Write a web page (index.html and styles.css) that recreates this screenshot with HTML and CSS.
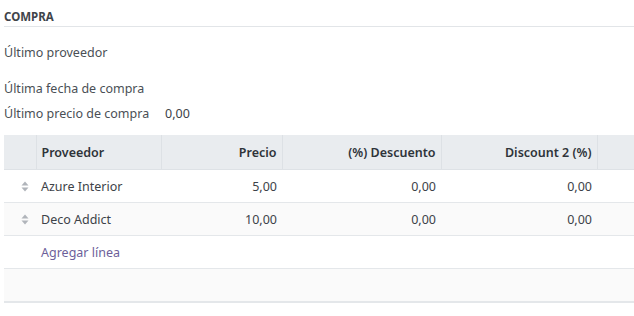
FILE: index.html
```html
<!DOCTYPE html>
<html lang="es">
<head>
  <meta charset="UTF-8">
  <title>Compra</title>
  <link rel="stylesheet" href="styles.css">
</head>
<body>
  <div class="grupo">
    <div class="grupo-titulo">Compra</div>

    <div class="campo campo-alto"><span class="etiqueta">Último proveedor</span></div>
    <div class="campo"><span class="etiqueta">Última fecha de compra</span></div>
    <div class="campo campo-corto">
      <span class="etiqueta">Último precio de compra</span>
      <span class="valor">0,00</span>
    </div>

    <table class="lista">
      <colgroup>
        <col class="col-handle">
        <col class="col-proveedor">
        <col class="col-precio">
        <col class="col-desc">
        <col class="col-desc2">
        <col class="col-resto">
      </colgroup>
      <thead>
        <tr>
          <th></th>
          <th>Proveedor</th>
          <th class="num">Precio</th>
          <th class="num">(%) Descuento</th>
          <th class="num">Discount 2 (%)</th>
          <th></th>
        </tr>
      </thead>
      <tbody>
        <tr>
          <td class="handle"><svg width="8" height="11" viewBox="0 0 8 11"><path d="M4 0.5 L7.5 4.5 H0.5 Z M4 10.5 L7.5 6.5 H0.5 Z" fill="#b0b4ba"/></svg></td>
          <td>Azure Interior</td>
          <td class="num">5,00</td>
          <td class="num">0,00</td>
          <td class="num">0,00</td>
          <td></td>
        </tr>
        <tr class="par">
          <td class="handle"><svg width="8" height="11" viewBox="0 0 8 11"><path d="M4 0.5 L7.5 4.5 H0.5 Z M4 10.5 L7.5 6.5 H0.5 Z" fill="#b0b4ba"/></svg></td>
          <td>Deco Addict</td>
          <td class="num">10,00</td>
          <td class="num">0,00</td>
          <td class="num">0,00</td>
          <td></td>
        </tr>
        <tr>
          <td></td>
          <td colspan="5"><a class="agregar" href="#">Agregar línea</a></td>
        </tr>
        <tr class="par vacia">
          <td colspan="6"></td>
        </tr>
      </tbody>
    </table>
  </div>
</body>
</html>
```

FILE: styles.css
```css
body {
  margin: 0;
  font-family: "Noto Sans", "Open Sans", sans-serif;
  font-size: 12.5px;
  color: #4a4f55;
  background: #fff;
}
.grupo {
  padding: 9px 0 0 4px;
}
.grupo-titulo {
  font-size: 11.5px;
  font-weight: bold;
  text-transform: uppercase;
  color: #3f444a;
  line-height: 16px;
  padding-bottom: 1px;
  border-bottom: 1px solid #e2e5e8;
}
.campo {
  display: flex;
  align-items: center;
  height: 25px;
}
.campo-alto {
  margin-top: 13px;
  margin-bottom: 11px;
}
.etiqueta {
  width: 161px;
}
.valor {
  color: #3d4248;
}
.lista {
  margin-top: 9px;
  border-collapse: collapse;
  table-layout: fixed;
  width: 650px;
}
.col-handle { width: 32px; }
.col-proveedor { width: 125px; }
.col-precio { width: 121px; }
.col-desc { width: 159px; }
.col-desc2 { width: 156px; }
.lista th {
  background: #e9ecef;
  height: 34px;
  padding: 0 5px;
  text-align: left;
  font-weight: 600;
  color: #2f343a;
  border-left: 1px solid #dde1e5;
  border-bottom: 1px solid #dee2e6;
}
.lista th:first-child {
  border-left: none;
}
.lista td {
  height: 32px;
  padding: 0 5px;
  border-bottom: 1px solid #e4e7ea;
  color: #3d4248;
}
.lista .num {
  text-align: right;
}
.lista tr.par td {
  background: #fafafa;
}
.lista tr.vacia td {
  border-bottom: 2px solid #e4e7ea;
}
.handle {
  text-align: right;
  padding-right: 7px !important;
  line-height: 0;
}
.agregar {
  color: #6d5f9a;
  text-decoration: none;
}
```
